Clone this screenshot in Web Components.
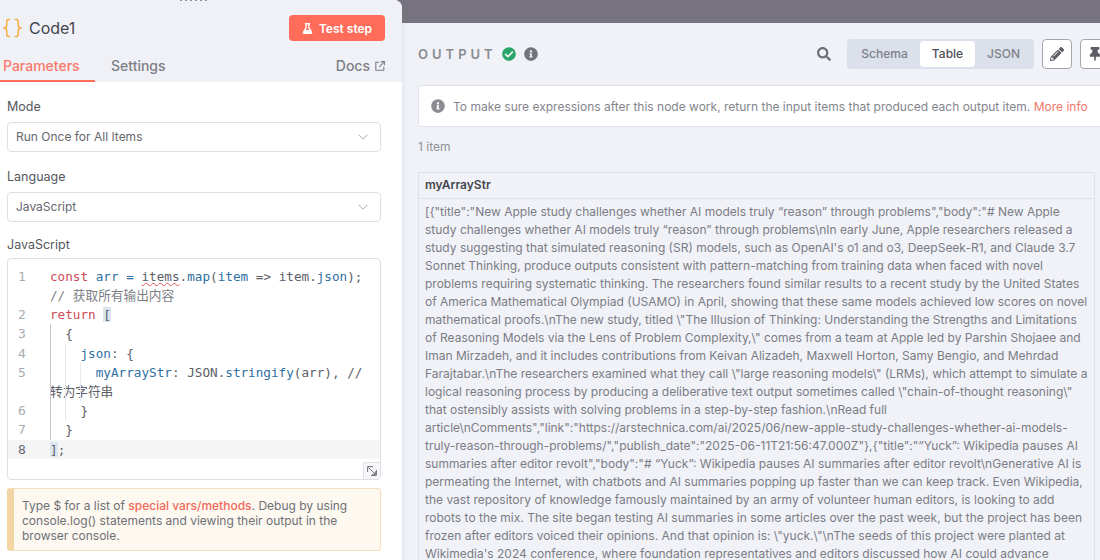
<!DOCTYPE html>
<html lang="en">
<head>
<meta charset="utf-8">
<title>Code1</title>
<style>
  html, body { margin: 0; height: 100%; overflow: hidden; background: #76737f; }
  body { font-family: Inter, "Noto Sans CJK SC", sans-serif; }
</style>
</head>
<body>
<ndv-shell>
  <node-panel slot="left" title-text="Code1">
    <field-select label="Mode" value="Run Once for All Items"></field-select>
    <field-select label="Language" value="JavaScript"></field-select>
    <code-editor label="JavaScript">
      <code-line n="1"><span class="k">const</span> <span class="v">arr</span> <span class="v">=</span> <span class="e">items</span>.<span class="v">map</span>(<span class="v">item</span> =&gt; item.<span class="v">json</span>); <span class="c">// 获取所有输出内容</span></code-line>
      <code-line n="2"><span class="k">return</span> <span class="b">[</span></code-line>
      <code-line n="3" depth="1">  {</code-line>
      <code-line n="4" depth="2">    <span class="v">json</span>: {</code-line>
      <code-line n="5" depth="3">      <span class="v">myArrayStr</span>: JSON.<span class="v">stringify</span>(arr), // 转为字符串</code-line>
      <code-line n="6" depth="2">    }</code-line>
      <code-line n="7" depth="1">  }</code-line>
      <code-line n="8" active><span class="b">]</span>;</code-line>
    </code-editor>
    <hint-box>Type $ for a list of <b>special vars/methods</b>. Debug by using console.log() statements and viewing their output in the browser console.</hint-box>
  </node-panel>
  <output-panel slot="right">
    <output-toolbar></output-toolbar>
    <info-banner>To make sure expressions after this node work, return the input items that produced each output item. <a>More info</a></info-banner>
    <span class="count" style="display:block;font-size:12px;color:#8f9196;margin:12px 0 18px;line-height:15px">1 item</span>
    <data-table heading="myArrayStr">[{"title":"New Apple study challenges whether AI models truly “reason” through problems","body":"# New Apple<br>
study challenges whether AI models truly “reason” through problems\nIn early June, Apple researchers released a<br>
study suggesting that simulated reasoning (SR) models, such as OpenAI's o1 and o3, DeepSeek-R1, and Claude 3.7<br>
Sonnet Thinking, produce outputs consistent with pattern-matching from training data when faced with novel<br>
problems requiring systematic thinking. The researchers found similar results to a recent study by the United States<br>
of America Mathematical Olympiad (USAMO) in April, showing that these same models achieved low scores on novel<br>
mathematical proofs.\nThe new study, titled \"The Illusion of Thinking: Understanding the Strengths and Limitations<br>
of Reasoning Models via the Lens of Problem Complexity,\" comes from a team at Apple led by Parshin Shojaee and<br>
Iman Mirzadeh, and it includes contributions from Keivan Alizadeh, Maxwell Horton, Samy Bengio, and Mehrdad<br>
Farajtabar.\nThe researchers examined what they call \"large reasoning models\" (LRMs), which attempt to simulate a<br>
logical reasoning process by producing a deliberative text output sometimes called \"chain-of-thought reasoning\"<br>
that ostensibly assists with solving problems in a step-by-step fashion.\nRead full<br>
article\nComments","link":"https://arstechnica.com/ai/2025/06/new-apple-study-challenges-whether-ai-models-<br>
truly-reason-through-problems/","publish_date":"2025-06-11T21:56:47.000Z"},{"title":"“Yuck”: Wikipedia pauses AI<br>
summaries after editor revolt","body":"# “Yuck”: Wikipedia pauses AI summaries after editor revolt\nGenerative AI is<br>
permeating the Internet, with chatbots and AI summaries popping up faster than we can keep track. Even Wikipedia,<br>
the vast repository of knowledge famously maintained by an army of volunteer human editors, is looking to add<br>
robots to the mix. The site began testing AI summaries in some articles over the past week, but the project has been<br>
frozen after editors voiced their opinions. And that opinion is: \"yuck.\"\nThe seeds of this project were planted at<br>
Wikimedia's 2024 conference, where foundation representatives and editors discussed how AI could advance</data-table>
  </output-panel>
</ndv-shell>

<script>
const ICONS = {
  flask: ["0 0 448 512", "M437.2 403.5L320 215V64h8c13.3 0 24-10.7 24-24V24c0-13.3-10.7-24-24-24H120c-13.3 0-24 10.7-24 24v16c0 13.3 10.7 24 24 24h8v151L10.8 403.5C-18.5 450.6 15.3 512 70.9 512h306.2c55.7 0 89.4-61.5 60.1-108.5zM137.9 320l48.2-77.6c3.7-5.2 5.8-11.6 5.8-18.4V64h64v160c0 6.9 2.2 13.2 5.8 18.4l48.2 77.6h-172z"],
  check: ["0 0 512 512", "M504 256c0 136.967-111.033 248-248 248S8 392.967 8 256 119.033 8 256 8s248 111.033 248 248zM227.314 387.314l184-184c6.248-6.248 6.248-16.379 0-22.627l-22.627-22.627c-6.248-6.249-16.379-6.249-22.628 0L216 308.118l-70.059-70.059c-6.248-6.248-16.379-6.248-22.628 0l-22.627 22.627c-6.248 6.248-6.248 16.379 0 22.627l104 104c6.249 6.249 16.379 6.249 22.628.001z"],
  info: ["0 0 512 512", "M256 8C119.043 8 8 119.083 8 256c0 136.997 111.043 248 248 248s248-111.003 248-248C504 119.083 392.957 8 256 8zm0 110c23.196 0 42 18.804 42 42s-18.804 42-42 42-42-18.804-42-42 18.804-42 42-42zm56 254c0 6.627-5.373 12-12 12h-88c-6.627 0-12-5.373-12-12v-24c0-6.627 5.373-12 12-12h12v-64h-12c-6.627 0-12-5.373-12-12v-24c0-6.627 5.373-12 12-12h64c6.627 0 12 5.373 12 12v100h12c6.627 0 12 5.373 12 12v24z"],
  search: ["0 0 512 512", "M505 442.7L405.3 343c-4.5-4.5-10.6-7-17-7H372c27.6-35.3 44-79.7 44-128C416 93.1 322.9 0 208 0S0 93.1 0 208s93.1 208 208 208c48.3 0 92.7-16.4 128-44v16.3c0 6.4 2.5 12.5 7 17l99.7 99.7c9.4 9.4 24.6 9.4 33.9 0l28.3-28.3c9.4-9.4 9.4-24.6.1-34zM208 336c-70.7 0-128-57.2-128-128 0-70.7 57.2-128 128-128 70.7 0 128 57.2 128 128 0 70.7-57.2 128-128 128z"],
  pencil: ["0 0 512 512", "M497.9 142.1l-46.1 46.1c-4.7 4.7-12.3 4.7-17 0l-111-111c-4.7-4.7-4.7-12.3 0-17l46.1-46.1c18.7-18.7 49.1-18.7 67.9 0l60.1 60.1c18.8 18.7 18.8 49.1 0 67.9zM284.2 99.8L21.6 362.4.4 483.9c-2.9 16.4 11.4 30.6 27.8 27.8l121.5-21.3 262.6-262.6c4.7-4.7 4.7-12.3 0-17l-111-111c-4.8-4.7-12.4-4.7-17.1 0zM124.1 339.9c-5.5-5.5-5.5-14.3 0-19.8l154-154c5.5-5.5 14.3-5.5 19.8 0s5.5 14.3 0 19.8l-154 154c-5.5 5.5-14.3 5.5-19.8 0zM88 424h48v36.3l-64.5 11.3-31.1-31.1L51.7 376H88v48z"],
  pin: ["0 0 384 512", "M298.028 214.267L285.793 96H328c13.255 0 24-10.745 24-24V24c0-13.255-10.745-24-24-24H56C42.745 0 32 10.745 32 24v48c0 13.255 10.745 24 24 24h42.207L85.972 214.267C37.465 236.82 0 277.261 0 328c0 13.255 10.745 24 24 24h136v104.007c0 1.242.289 2.467.845 3.578l24 48c2.941 5.882 11.364 5.893 14.311 0l24-48a8.008 8.008 0 0 0 .845-3.578V352h136c13.255 0 24-10.745 24-24-.001-51.183-37.983-91.42-85.973-113.733z"]
};

function icon(name, size, color) {
  const [box, d] = ICONS[name];
  return `<svg width="${size}" height="${size}" viewBox="${box}" style="display:block;flex:none"><path fill="${color}" d="${d}"/></svg>`;
}

class NdvShell extends HTMLElement {
  constructor() {
    super();
    this.attachShadow({ mode: "open" }).innerHTML = `
    <style>
      :host { display: grid; grid-template-columns: 402px 1fr; width: 1100px; height: 560px; overflow: hidden; background: #76737f; }
      .right { padding-top: 23px; min-width: 0; height: 560px; box-sizing: border-box; }
    </style>
    <slot name="left"></slot>
    <div class="right"><slot name="right"></slot></div>`;
  }
}

class NodePanel extends HTMLElement {
  constructor() {
    super();
    const title = this.getAttribute("title-text");
    this.attachShadow({ mode: "open" }).innerHTML = `
    <style>
      :host { display: flex; flex-direction: column; height: 560px; background: #fff; border-top-right-radius: 8px; overflow: hidden; position: relative; z-index: 1; font-family: Inter, sans-serif; }
      .grip { position: absolute; top: 0; left: 180px; width: 28px; height: 1px; background: repeating-linear-gradient(90deg, #8d8d96 0 2px, transparent 2px 5px); }
      header { background: #f0f1f6; height: 82px; box-sizing: border-box; flex: none; }
      .top { display: flex; align-items: center; height: 42px; padding: 14px 17px 0 3px; box-sizing: border-box; }
      h1 { margin: 0 0 0 7px; font-size: 16px; font-weight: 400; color: #44464d; flex: 1; line-height: 28px; }
      button { display: flex; align-items: center; justify-content: center; gap: 6px; width: 96px; height: 26px; margin: 0; padding: 0; border: 0; border-radius: 4px; background: #ff6d5a; color: #fff; font: 600 12px Inter, sans-serif; }
      nav { display: flex; align-items: flex-end; height: 40px; font-size: 14px; font-weight: 500; color: #7d7e86; }
      nav span { display: block; padding-bottom: 8px; line-height: 17px; height: 17px; }
      nav .active { color: #fb7869; width: 92px; padding-left: 3px; padding-bottom: 6px; border-bottom: 2px solid #ff6d5a; }
      .settings { margin-left: 16px; flex: 1; }
      nav .docs { display: flex; align-items: center; gap: 5px; padding-right: 17px; }
      main { display: flex; flex-direction: column; padding: 17px 21px 0 7px; }
    </style>
    <div class="grip"></div>
    <header>
      <div class="top">
        <svg width="19" height="22" viewBox="0 0 19 22" fill="none" stroke="#f5a83c" stroke-width="1.4" stroke-linecap="round">
          <path d="M6.5 2.5H5.6C4.3 2.5 3.8 3.2 3.8 4.5v3.6c0 1.6-.6 2.4-2.3 2.9 1.7.5 2.3 1.3 2.3 2.9v3.6c0 1.3.5 2 1.8 2h.9"/>
          <path d="M12.5 2.5h.9c1.3 0 1.8.7 1.8 2v3.6c0 1.6.6 2.4 2.3 2.9-1.7.5-2.3 1.3-2.3 2.9v3.6c0 1.3-.5 2-1.8 2h-.9"/>
        </svg>
        <h1>${title}</h1>
        <button>${icon("flask", 11, "#fff")}Test step</button>
      </div>
      <nav>
        <span class="active">Parameters</span>
        <span class="settings">Settings</span>
        <span class="docs">Docs
          <svg width="10" height="10" viewBox="0 0 10 10" fill="none" stroke="#7d7e86" stroke-width="1.1"><path d="M4.2 1.2H.8v8h8V5.8M5.8.6h3.6v3.6M9.2.8 4.2 5.8"/></svg>
        </span>
      </nav>
    </header>
    <main><slot></slot></main>`;
  }
}

class FieldSelect extends HTMLElement {
  constructor() {
    super();
    this.attachShadow({ mode: "open" }).innerHTML = `
    <style>
      :host { display: block; margin-bottom: 17px; font-family: Inter, sans-serif; }
      label { display: block; font-size: 12.5px; line-height: 16px; color: #55565c; margin-bottom: 7px; }
      .box { display: flex; align-items: center; justify-content: space-between; height: 30px; box-sizing: border-box; padding: 0 12px 0 8px; background: #fff; border: 1px solid #dcdfe6; border-radius: 4px; font-size: 12px; color: #65676d; }
      .box span { padding-bottom: 2px; }
    </style>
    <label>${this.getAttribute("label")}</label>
    <div class="box">
      <span>${this.getAttribute("value")}</span>
      <svg width="10" height="6" viewBox="0 0 10 6" fill="none" stroke="#a9abb3" stroke-width="1"><path d="M.5.7 5 5.2 9.5.7"/></svg>
    </div>`;
  }
}

class CodeEditor extends HTMLElement {
  constructor() {
    super();
    this.attachShadow({ mode: "open" }).innerHTML = `
    <style>
      :host { display: block; font-family: Inter, sans-serif; margin-top: -2px; }
      label { display: block; font-size: 12.5px; line-height: 16px; color: #55565c; margin-bottom: 5px; }
      .box { position: relative; height: 222px; box-sizing: border-box; padding-top: 7.7px; background: #fff; border: 1px solid #dcdfe6; border-radius: 4px; }
      .resize { position: absolute; right: 0; bottom: 0; width: 16px; height: 16px; background: #f7f7f9; border: 1px solid #dcdfe6; border-right: 0; border-bottom: 0; border-top-left-radius: 3px; display: flex; align-items: center; justify-content: center; }
    </style>
    <label>${this.getAttribute("label")}</label>
    <div class="box">
      <slot></slot>
      <div class="resize">
        <svg width="10" height="10" viewBox="0 0 10 10" fill="none" stroke="#6f7076" stroke-width="1"><path d="M.6 6V.6H6M9.4 4v5.4H4M1.5 1.5l7 7M8.4 5.4v3h-3"/></svg>
      </div>
    </div>`;
  }
}

class CodeLine extends HTMLElement {
  constructor() {
    super();
    const depth = Number(this.getAttribute("depth") || 0);
    const colors = ["#c5c7cf", "#e4e5ea", "#e9eaee"];
    let guides = "";
    for (let i = 0; i < depth; i++) {
      guides += `<i style="left:${42 + i * 15.2}px;background:${colors[i]}"></i>`;
    }
    this.attachShadow({ mode: "open" }).innerHTML = `
    <style>
      :host { display: grid; grid-template-columns: 42px 1fr; position: relative; font: 12.67px/19.2px "DejaVu Sans Mono", monospace; color: #5b5e66; }
      :host([active]) { background: #f5f5f6; }
      .n { padding-left: 10px; color: #a9acb3; font-size: 13px; }
      :host([active]) .n { color: #666870; }
      .t { white-space: pre-wrap; word-break: normal; font-family: "DejaVu Sans Mono", "Noto Sans CJK SC", monospace; padding-right: 4px; }
      i { position: absolute; top: 0; bottom: 0; width: 1px; }
    </style>
    ${guides}
    <span class="n">${this.getAttribute("n")}</span>
    <span class="t"><slot></slot></span>`;
  }
}

class HintBox extends HTMLElement {
  constructor() {
    super();
    this.attachShadow({ mode: "open" }).innerHTML = `
    <style>
      :host { display: block; margin-top: 8px; padding: 9px 8px 8px 8px; box-sizing: border-box; height: 63px; background: #fdf8f0; border: 1px solid #f3dfbc; border-left: 7px solid #f2d5a2; border-radius: 3px; font: 12px/15px Inter, sans-serif; color: #6f7076; }
      ::slotted(b) { color: #f0695a; font-weight: 500; }
    </style>
    <slot></slot>`;
  }
}

class OutputPanel extends HTMLElement {
  constructor() {
    super();
    this.attachShadow({ mode: "open" }).innerHTML = `
    <style>
      :host { display: block; height: 537px; overflow: hidden; box-sizing: border-box; padding: 16px 5px 0 16px; background: #f0f2f8; font-family: Inter, sans-serif; box-shadow: inset 4px 0 4px -3px #e0e3ee; }
    </style>
    <slot></slot>`;
  }
}

class OutputToolbar extends HTMLElement {
  constructor() {
    super();
    this.attachShadow({ mode: "open" }).innerHTML = `
    <style>
      :host { display: flex; align-items: center; width: 692px; height: 30px; font-family: Inter, sans-serif; }
      .label { font-size: 13px; font-weight: 600; letter-spacing: 4px; color: #8a8b91; margin-right: 5px; }
      .status { display: flex; gap: 8px; flex: 1; }
      .search { margin-right: 16px; }
      .switch { display: flex; align-items: center; height: 30px; width: 187px; box-sizing: border-box; padding: 0 2px; background: #dbe0ea; border-radius: 4px; font-size: 12px; font-weight: 500; color: #7f818a; }
      .switch span { text-align: center; line-height: 26px; height: 26px; }
      .switch .schema { width: 71px; }
      .switch .on { width: 55px; background: #fff; color: #4f5057; border-radius: 4px; }
      .switch .json { width: 57px; }
      .btn { display: flex; align-items: center; justify-content: center; width: 30px; height: 30px; box-sizing: border-box; background: #fff; border: 1px solid #a5a6ad; border-radius: 4px; margin-left: 8px; }
    </style>
    <span class="label">OUTPUT</span>
    <div class="status">${icon("check", 14, "#29a568")}${icon("info", 14, "#73747b")}</div>
    <div class="search">${icon("search", 14, "#707178")}</div>
    <div class="switch"><span class="schema">Schema</span><span class="on">Table</span><span class="json">JSON</span></div>
    <div class="btn">${icon("pencil", 14, "#5d5e65")}</div>
    <div class="btn">${icon("pin", 14, "#5d5e65")}</div>`;
  }
}

class InfoBanner extends HTMLElement {
  constructor() {
    super();
    this.attachShadow({ mode: "open" }).innerHTML = `
    <style>
      :host { display: flex; align-items: center; gap: 8px; width: 692px; height: 42px; box-sizing: border-box; margin-top: 16px; padding-left: 12px; background: #fff; border: 1px solid #dfe2eb; border-radius: 4px; font-size: 12px; color: #83858c; white-space: nowrap; }
      ::slotted(a) { color: #f0776a; }
    </style>
    ${icon("info", 14, "#8b8c92")}
    <span><slot></slot></span>`;
  }
}

class DataTable extends HTMLElement {
  constructor() {
    super();
    this.attachShadow({ mode: "open" }).innerHTML = `
    <style>
      :host { display: block; width: 677px; box-sizing: border-box; border: 1px solid #dfe2eb; font-family: Inter, sans-serif; }
      .head { height: 25px; padding-left: 6px; font-size: 12px; font-weight: 600; line-height: 23px; color: #45464d; border-bottom: 1px solid #dfe2eb; }
      .cell { padding: 4px 6px; font-size: 12px; line-height: 18px; color: #7b7c84; white-space: nowrap; }
    </style>
    <div class="head">${this.getAttribute("heading")}</div>
    <div class="cell"><slot></slot></div>`;
  }
}

customElements.define("ndv-shell", NdvShell);
customElements.define("node-panel", NodePanel);
customElements.define("field-select", FieldSelect);
customElements.define("code-editor", CodeEditor);
customElements.define("code-line", CodeLine);
customElements.define("hint-box", HintBox);
customElements.define("output-panel", OutputPanel);
customElements.define("output-toolbar", OutputToolbar);
customElements.define("info-banner", InfoBanner);
customElements.define("data-table", DataTable);
</script>
<style>
  code-line .k { color: #cf4a57; }
  code-line .v { color: #2f6f9f; }
  code-line .c { color: #7b7e85; }
  code-line .e { text-decoration: underline wavy #e05a5a 1px; }
  code-line .b { background: #dbe5ef; }
</style>
</body>
</html>
